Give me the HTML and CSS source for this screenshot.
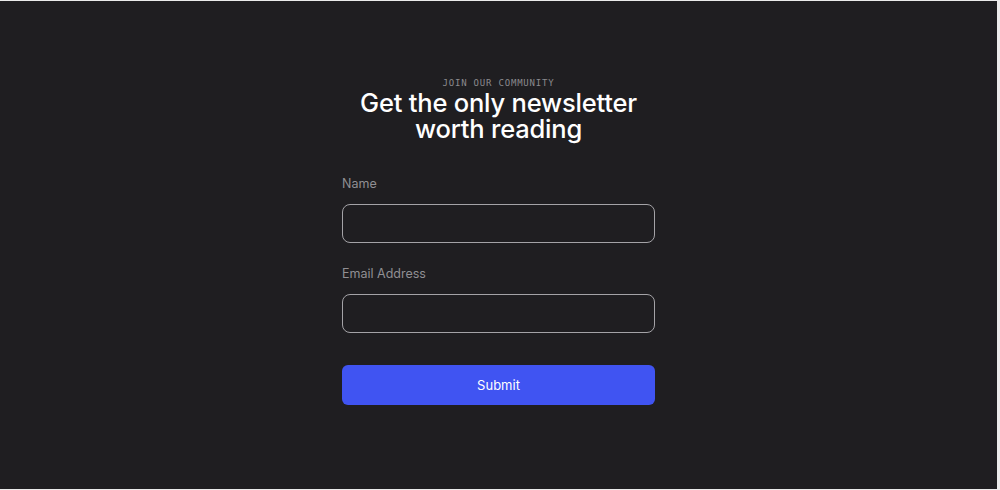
FILE: index.html
```html
<!DOCTYPE html>
<html lang="en">
<head>
<meta charset="utf-8">
<title>Newsletter</title>
<link rel="stylesheet" href="styles.css">
</head>
<body>
<section class="signup">
  <p class="eyebrow">JOIN OUR COMMUNITY</p>
  <h1 class="title">Get the only newsletter<br>worth reading</h1>
  <form class="form">
    <div class="field">
      <label class="label" for="name">Name</label>
      <input class="input" id="name" type="text">
    </div>
    <div class="field">
      <label class="label" for="email">Email Address</label>
      <input class="input" id="email" type="email">
    </div>
    <button class="submit" type="button">Submit</button>
  </form>
</section>
</body>
</html>
```

FILE: styles.css
```css
* { box-sizing: border-box; }
html, body { margin: 0; padding: 0; }
body {
  background: #ebebeb;
  font-family: "Inter", "Liberation Sans", sans-serif;
}
.signup {
  width: 997px;
  height: 488px;
  margin-top: 1px;
  background: #1f1e21;
  display: flex;
  flex-direction: column;
  align-items: center;
  padding-top: 76px;
}
.eyebrow {
  margin: 0;
  font-family: "DejaVu Sans Mono", "Liberation Mono", monospace;
  font-size: 9px;
  line-height: 12px;
  letter-spacing: 0.8px;
  color: #8b8a8e;
}
.title {
  margin: 1px 0 0;
  font-size: 25.5px;
  line-height: 26px;
  font-weight: 500;
  letter-spacing: -0.2px;
  color: #ffffff;
  text-align: center;
}
.form {
  width: 313px;
  margin-top: 34px;
  display: flex;
  flex-direction: column;
  gap: 23px;
}
.field {
  display: flex;
  flex-direction: column;
  gap: 12px;
}
.label {
  font-size: 12.5px;
  line-height: 16px;
  color: #908f93;
}
.input {
  height: 39px;
  border: 1px solid #a4a3a7;
  border-radius: 8px;
  background: transparent;
  color: #fff;
  padding: 0 12px;
  font: inherit;
}
.submit {
  margin-top: 9px;
  height: 40px;
  border: 0;
  border-radius: 6px;
  background: #4054f2;
  color: #ffffff;
  font-family: inherit;
  font-size: 13px;
  font-weight: 400;
}
```
